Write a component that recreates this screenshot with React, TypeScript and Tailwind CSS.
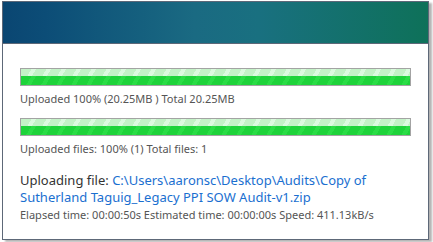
import React from 'react';

interface ProgressBarProps {
  percent: number;
}

const ProgressBar: React.FC<ProgressBarProps> = ({ percent }) => {
  return (
    <div className="h-[18px] w-full border border-[#a3a3a3] bg-[#e6e6e6]">
      <div className="flex h-full flex-col" style={{ width: `${percent}%` }}>
        <div className="h-[7px] bg-[repeating-linear-gradient(120deg,#c4f2c7_0px,#c4f2c7_9px,#dcfadf_9px,#dcfadf_13px)]" />
        <div className="flex-1 bg-[repeating-linear-gradient(120deg,#1ed33a_0px,#1ed33a_9px,#2add45_9px,#2add45_13px)]" />
      </div>
    </div>
  );
};

const UploadProgress: React.FC = () => {
  return (
    <div className="h-[242px] w-[433px] overflow-hidden bg-white font-['Noto_Sans','Open_Sans',sans-serif]">
      <div className="ml-[2px] mt-[1px] flex h-[239px] w-[427px] flex-col border border-[#5d6878] bg-white shadow-[3px_2px_2px_rgba(0,0,0,0.3)]">
        <div className="h-[42px] border-b border-[#5d6878] bg-[linear-gradient(90deg,#0a4672_0%,#0c4d77_10%,#1a6a82_45%,#197080_60%,#0e7159_100%)]" />

        <div className="px-[17px] pt-[24px]">
          <ProgressBar percent={100} />
          <p className="mt-[5px] text-[11px] leading-[15px] text-[#555]">
            Uploaded 100% (20.25MB ) Total 20.25MB
          </p>

          <div className="mt-[12px]">
            <ProgressBar percent={100} />
          </div>
          <p className="mt-[5px] text-[11px] leading-[15px] text-[#555]">
            Uploaded files: 100% (1) Total files: 1
          </p>

          <p className="mt-[16px] text-[13px] leading-[17px] text-[#333]">
            Uploading file:{' '}
            <span className="text-[#1a6fd0]">
              C:\Users\aaronsc\Desktop\Audits\Copy of Sutherland
              Taguig_Legacy PPI SOW Audit-v1.zip
            </span>
          </p>
          <p className="mt-[1px] text-[11px] leading-[15px] text-[#555]">
            Elapsed time: 00:00:50s Estimated time: 00:00:00s Speed: 411.13kB/s
          </p>
        </div>
      </div>
    </div>
  );
};

export default UploadProgress;
